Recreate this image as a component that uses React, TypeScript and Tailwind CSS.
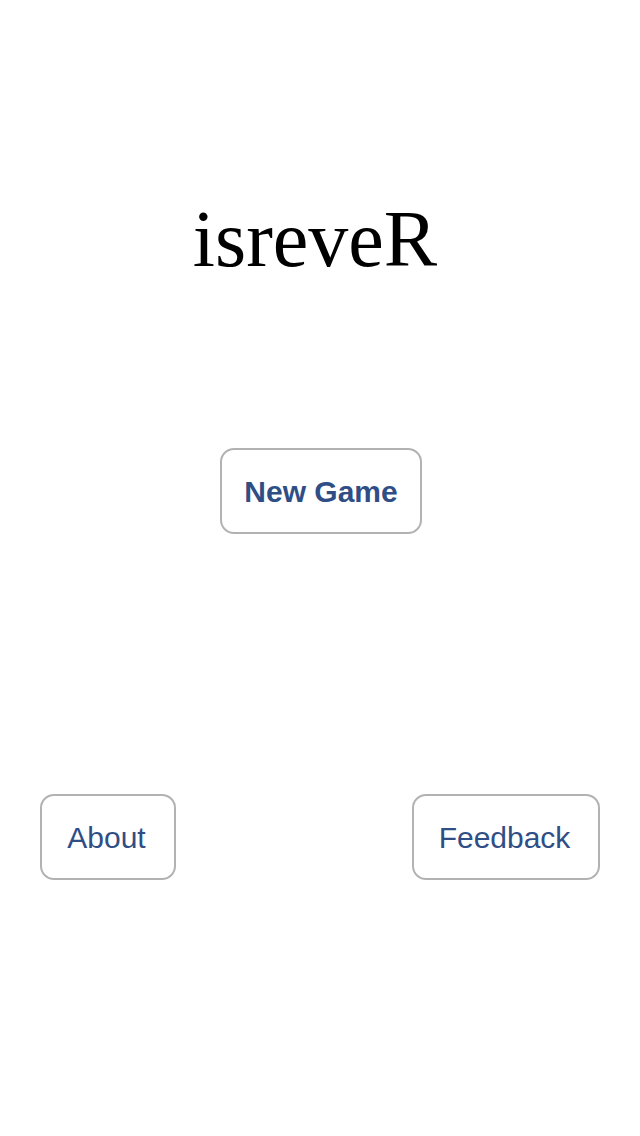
import React from "react";

const btn =
  "flex items-center justify-center h-[86px] rounded-[14px] border-2 border-[#b2b2b2] bg-white text-[30px] text-[#2f4e86] font-['Liberation_Sans',Arial,sans-serif]";

export default function App() {
  return (
    <div className="w-[640px] h-[1136px] bg-white flex flex-col">
      {/* Title */}
      <h1 className="mt-[199px] h-[80px] pr-[10px] text-center text-[80px] leading-none text-black font-['Liberation_Serif','Times_New_Roman',serif]">
        isreveR
      </h1>

      {/* Main action */}
      <div className="mt-[169px] flex justify-center pl-[2px]">
        <button className={`${btn} w-[202px] font-bold`}>New Game</button>
      </div>

      {/* Secondary actions */}
      <div className="mt-[260px] flex justify-between pl-[40px] pr-[40px]">
        <button className={`${btn} w-[136px] pr-[3px]`}>About</button>
        <button className={`${btn} w-[188px] pr-[3px]`}>Feedback</button>
      </div>
    </div>
  );
}
